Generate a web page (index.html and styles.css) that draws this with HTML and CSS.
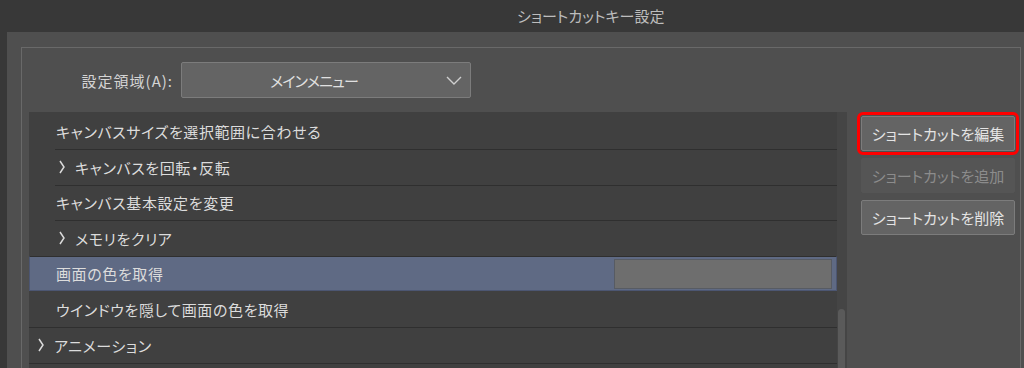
FILE: index.html
```html
<!doctype html>
<html lang="ja">
  <head>
    <meta charset="utf-8" />
    <title>ショートカットキー設定</title>
    <link rel="stylesheet" href="styles.css">
  </head>
  <body>
    <div class="titlebar">ショートカットキー設定</div>
    <div class="window">
      <div class="group">
        <div class="area-row">
          <label class="area-label">設定領域(A):</label>
          <div class="select">
            <span class="select-text">メインメニュー</span>
            <svg class="select-arrow" width="16" height="9" viewBox="0 0 16 9"><polyline points="1,1 8,8 15,1" fill="none" stroke="#cfcfcf" stroke-width="1.4"/></svg>
          </div>
        </div>

        <div class="main">
          <div class="list">
            <div class="rows">
              <div class="row first"><div class="cell leaf">キャンバスサイズを選択範囲に合わせる</div></div>
              <div class="row"><div class="cell folder"><svg class="chev" width="6" height="14" viewBox="0 0 6 14"><polyline points="1,1 5,7 1,13" fill="none" stroke="#dadada" stroke-width="1.5"/></svg>キャンバスを回転・反転</div></div>
              <div class="row"><div class="cell leaf">キャンバス基本設定を変更</div></div>
              <div class="row"><div class="cell folder"><svg class="chev" width="6" height="14" viewBox="0 0 6 14"><polyline points="1,1 5,7 1,13" fill="none" stroke="#dadada" stroke-width="1.5"/></svg>メモリをクリア</div></div>
              <div class="row selected"><div class="cell leaf">画面の色を取得</div><div class="keycell"></div></div>
              <div class="row after-sel"><div class="cell leaf">ウインドウを隠して画面の色を取得</div></div>
              <div class="row top"><div class="cell folder"><svg class="chev" width="6" height="14" viewBox="0 0 6 14"><polyline points="1,1 5,7 1,13" fill="none" stroke="#dadada" stroke-width="1.5"/></svg>アニメーション</div></div>
              <div class="row top"><div class="cell"></div></div>
            </div>
            <div class="scroll"><div class="thumb"></div></div>
          </div>

          <div class="buttons">
            <button class="btn focus">ショートカットを編集</button>
            <button class="btn disabled">ショートカットを追加</button>
            <button class="btn">ショートカットを削除</button>
          </div>
        </div>
      </div>
    </div>
  </body>
</html>
```

FILE: styles.css
```css
*{ box-sizing:border-box; }
body{ margin:0; width:1024px; height:368px; overflow:hidden; background:#383838; color:#dcdcdc;
  font-family:"Noto Sans CJK JP", "Noto Sans", sans-serif; font-size:15px; font-feature-settings:"palt"; }

.titlebar{ height:32px; line-height:32px; padding-left:517px; color:#bdbdbd; font-size:15px; white-space:nowrap; }

.window{ margin-left:7px; height:336px; background:#4f4f4f; padding:15px 0 0 14px; overflow:hidden; }
.group{ width:1000px; height:321px; border:1px solid #696969; border-bottom:0; padding:14px 0 0 7px; }

.area-row{ display:flex; align-items:center; gap:8px; height:36px; }
.area-label{ width:144px; text-align:right; color:#d4d4d4; letter-spacing:1px; }
.select{ width:290px; height:36px; background:#646464; border:1px solid #7c7c7c; border-radius:2px;
  display:flex; align-items:center; padding:0 4px 0 0; }
.select-text{ flex:1; text-align:center; color:#e0e0e0; letter-spacing:-0.8px; }
.select-arrow{ margin-right:4px; }

.main{ display:flex; margin-top:14px; }
.list{ display:flex; width:818px; height:256px; overflow:hidden; background:#404040; }
.rows{ width:808px; letter-spacing:0.6px; }
.row{ display:flex; height:35.6px; }
.row.first{ height:37px; }
.cell{ flex:1; display:flex; align-items:center; border-top:1px solid #2f2f2f; white-space:nowrap; }
.row.first .cell{ border-top-color:transparent; }
.cell.leaf{ margin-left:26px; padding-left:1px; }
.cell.folder{ margin-left:26px; padding-left:4px; }
.row.top .cell{ margin-left:0; padding-left:9px; }
.row.after-sel .cell{ border-top:0; }
.chev{ margin-right:10px; flex:none; }

.row.selected{ background:#5f6a84; border:1px solid #4c5672; border-top-color:#2f2f2f; align-items:center; }
.row.selected .cell{ border-top:0; margin-left:25px; height:100%; }
.keycell{ width:218px; height:30px; margin-right:4px; background:#6e6e6e; border:1px solid #575b63; }

.scroll{ width:10px; background:#454545; position:relative; }
.thumb{ position:absolute; left:1px; top:197px; width:7px; height:80px; border-radius:4px; background:#5a5a5a; }

.buttons{ margin-left:14px; margin-top:4px; width:154px; display:flex; flex-direction:column; gap:7px; }
.btn{ height:35px; width:154px; padding:0; font:inherit; font-size:15px; color:#e4e4e4; background:#646464;
  border:1px solid #7c7c7c; border-radius:2px; white-space:nowrap; }
.btn.focus{ outline:3px solid #ff0000; outline-offset:1px; }
.btn.disabled{ background:#555555; border-color:#555555; color:#8c8c8c; }
```
